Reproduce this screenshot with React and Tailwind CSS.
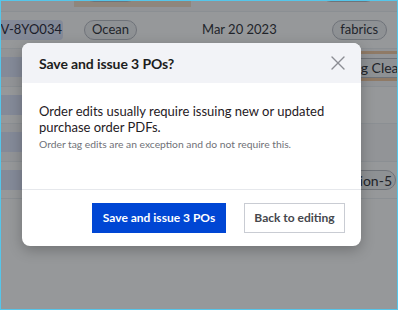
import { X } from "lucide-react";

const rows = [
  { id: "", ship: " ", date: "", tag: " ", tail: "", top: true },
  { id: "NV-8YO034", ship: "Ocean", date: "Mar 20 2023", tag: "fabrics", tail: "" },
  { id: "NV-P", ship: "", date: "", tag: "", tail: "Washing Cleaning", hl: true },
  { id: "NV-2", ship: "", date: "", tag: "", tail: "" },
  { id: "NV-9", ship: "", date: "", tag: "", tail: "" },
  { id: "NV-A", ship: "", date: "", tag: "", tail: "Collection-5", end: true },
];

const pill =
  "h-[20px] flex items-center justify-center rounded-full border border-[#b9bcc4] bg-[#f1f2f5] text-[13px] text-[#2b2d33] whitespace-nowrap";

const Row = ({ row, i }) => (
  <div
    className={`relative h-[37.5px] shrink-0 flex items-center border-b border-[#eceef2] ${
      i % 2 === 0 ? "bg-[#f7f8fa]" : "bg-white"
    }`}
  >
    {row.top && (
      <span className="absolute left-[73px] w-[117px] bottom-[4px] h-[12px] bg-[#f3dfc9]" />
    )}
    <span
      className={`ml-[-10px] w-[72px] h-[20px] flex items-center justify-end pr-[1px] rounded whitespace-nowrap text-[13px] text-[#1f2333] ${
        row.id ? "bg-[#dfe6fb]" : ""
      }`}
    >
      {row.id}
    </span>
    {row.ship && (
      <span className={`relative ml-[21px] w-[53px] ${pill}`}>{row.ship}</span>
    )}
    {row.date && (
      <span className="ml-[65px] text-[13px] text-[#2b2d33] whitespace-nowrap">{row.date}</span>
    )}
    {row.tag && (
      <span className={`relative ${row.top ? "ml-[184px]" : "ml-[55px]"} w-[55px] ${pill}`}>
        {row.tag}
      </span>
    )}
    {row.tail && (
      <span
        className={`absolute top-[8.5px] ${pill} ${
          row.end ? "right-[1px] pl-[7px] pr-[3px] text-[14px]" : "left-[306px] px-[7px] text-[14px]"
        }`}
      >
        {row.tail}
      </span>
    )}
    {row.hl && (
      <>
        <span className="absolute left-[330px] right-0 top-[2px] h-[3px] bg-[#f2c9a0]" />
        <span className="absolute left-[330px] right-0 bottom-[5px] h-[3px] bg-[#f2c9a0]" />
      </>
    )}
  </div>
);

export default function App() {
  return (
    <div
      className="relative w-[398px] h-[310px] overflow-hidden border border-[#55c6ea] bg-white"
      style={{ fontFamily: "Lato, 'Open Sans', sans-serif" }}
    >
      <div className="flex flex-col mt-[-27px]">
        {rows.map((row, i) => (
          <Row key={i} row={row} i={i} />
        ))}
      </div>

      <div className="absolute inset-0 bg-[rgba(22,26,32,0.45)]" />

      <div className="absolute left-[21px] top-[42px] w-[339px] h-[203px] flex flex-col rounded-lg bg-white overflow-hidden shadow-[0_4px_14px_rgba(0,0,0,0.25)]">
        <div className="h-[40px] shrink-0 flex items-center justify-between pl-[17px] pr-[11px] bg-[#f2f3f7]">
          <h2 className="text-[14px] tracking-[-0.1px] font-bold text-[#1c1d21]">
            Save and issue 3 POs?
          </h2>
          <X size={24} strokeWidth={1.4} className="text-[#8b8d93]" />
        </div>

        <div className="flex-1 pl-[17px] pr-[16px] pt-[20px]">
          <p className="text-[13px] leading-[16px] text-[#1f2024]">
            Order edits usually require issuing new or updated purchase order PDFs.
          </p>
          <p className="mt-[2px] text-[10.3px] leading-[14px] text-[#6f7177]">
            Order tag edits are an exception and do not require this.
          </p>
        </div>

        <div className="h-[57px] shrink-0 flex items-center justify-end gap-[18px] pr-[16px] border-t border-[#e6e8ec]">
          <button className="w-[134px] h-[30px] bg-[#0046d4] text-white text-[12px] font-bold">
            Save and issue 3 POs
          </button>
          <button className="w-[101px] h-[30px] bg-white border border-[#c9ccd3] text-[#45474d] text-[12px] font-bold">
            Back to editing
          </button>
        </div>
      </div>
    </div>
  );
}
